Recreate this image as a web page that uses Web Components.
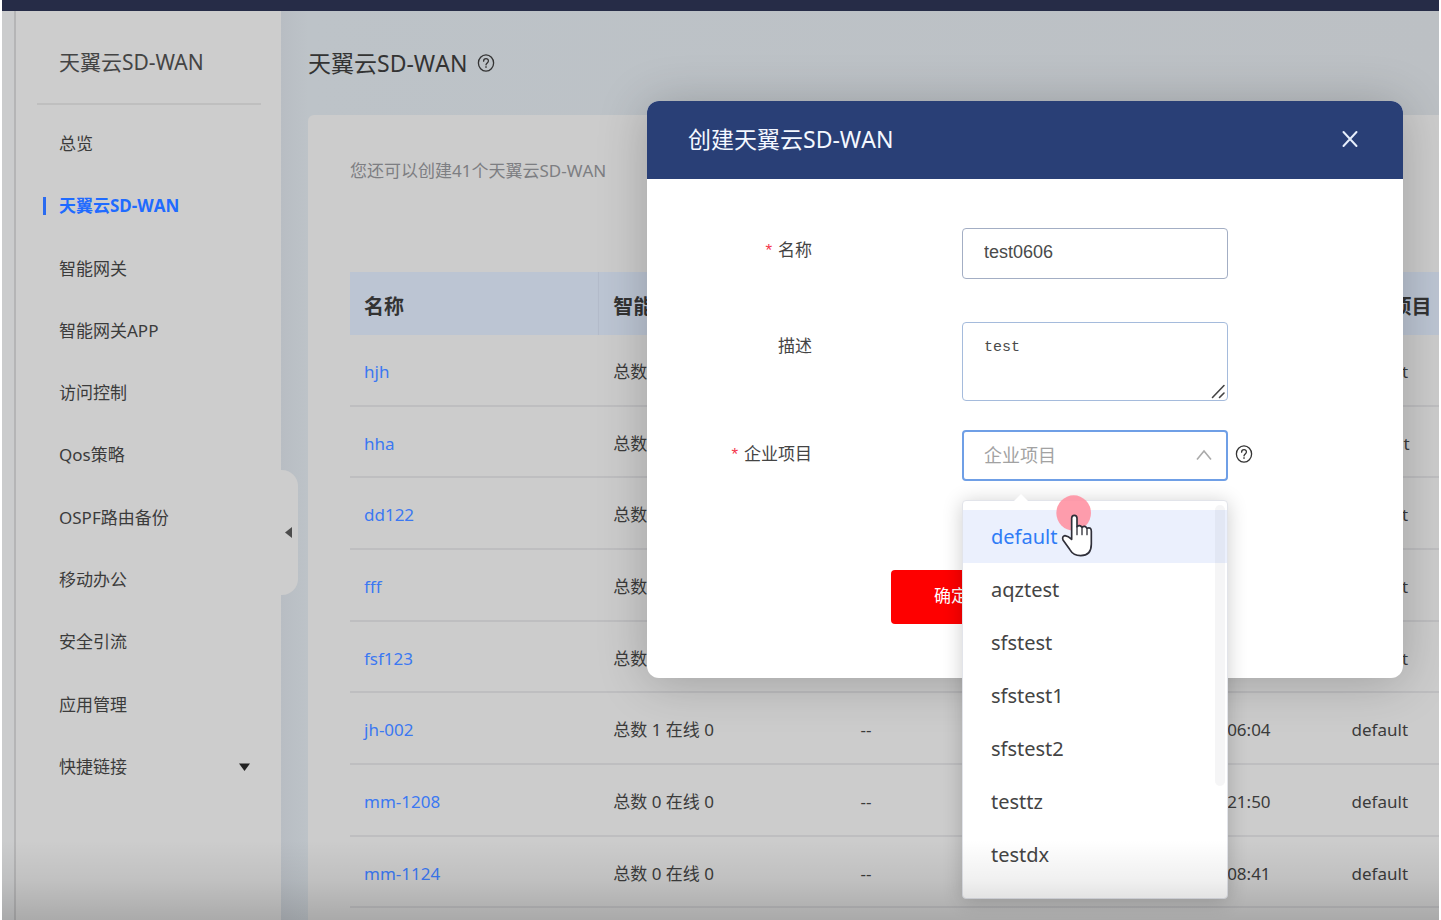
<!DOCTYPE html>
<html lang="zh-CN">
<head>
<meta charset="utf-8">
<title>天翼云SD-WAN</title>
<style>
  html, body { margin: 0; height: 100%; }
  body {
    background: #fff;
    overflow: hidden;
    font: 17px/24px "Noto Sans", "Noto Sans CJK SC", sans-serif;
    font-kerning: none;
    color: #3b3b3b;
  }
</style>
</head>
<body>
<sdwan-app></sdwan-app>

<script>
const define = (name, html, setup) => {
  const template = document.createElement('template');
  template.innerHTML = html;
  customElements.define(name, class extends HTMLElement {
    constructor() {
      super();
      this.attachShadow({ mode: 'open' }).append(template.content.cloneNode(true));
    }
    connectedCallback() {
      if (setup && !this.ready) { this.ready = true; setup(this, this.shadowRoot); }
    }
  });
};

define('help-icon', `
  <style>
    :host { display: inline-flex; color: #333; }
    svg { width: 18px; height: 18px; }
  </style>
  <svg viewBox="0 0 18 18" fill="none" stroke="currentColor" stroke-width="1.3" aria-hidden="true">
    <ellipse cx="9" cy="9" rx="7.6" ry="8.2"/>
    <path d="M6.6 7.2C6.6 3.8 11.6 4 11.4 7C11.3 8.8 9.1 9 9 10.9" stroke-linecap="round"/>
    <circle cx="9" cy="13" r=".5" fill="currentColor" stroke-width=".7"/>
  </svg>`);

define('nav-item', `
  <style>
    :host { display: flex; align-items: center; padding: 0 31px 0 27px; }
    a { flex: 1; display: flex; align-items: center; justify-content: space-between;
        padding-left: 13px; line-height: 18px; color: inherit; text-decoration: none;
        border-left: 3px solid transparent; }
    :host([active]) a { color: #1f6bff; font-weight: 700; border-left-color: #2a6bf0; }
    svg { display: none; width: 11px; height: 8px; }
    :host([expandable]) svg { display: block; }
  </style>
  <a href="#"><slot></slot><svg viewBox="0 0 11 8" aria-hidden="true"><path d="M0 .5H11L5.5 8Z" fill="#222"/></svg></a>`);

define('side-nav', `
  <style>
    :host { display: block; position: relative; box-sizing: border-box; width: 267px;
            background: #cdcdcd; border-left: 2px solid #b5b5b6; }
    h2 { margin: 0 20px 8px 21px; padding: 39px 0 29px 22px; font-size: 21px; line-height: 24px; font-kerning: normal;
         font-weight: 400; color: #444; border-bottom: 2px solid #bfbfbf; white-space: nowrap; }
    nav { display: grid; grid-auto-rows: 1fr; height: 685px; }
    button { position: absolute; left: 100%; top: 459px; width: 17px; height: 125px; padding: 0 0 0 4px;
             border: 0; border-radius: 0 16px 16px 0; background: #cdcdcd; display: flex; align-items: center; }
    button svg { width: 7px; height: 11px; }
  </style>
  <h2>天翼云SD-WAN</h2>
  <nav>
    <nav-item>总览</nav-item>
    <nav-item active>天翼云SD-WAN</nav-item>
    <nav-item>智能网关</nav-item>
    <nav-item>智能网关APP</nav-item>
    <nav-item>访问控制</nav-item>
    <nav-item>Qos策略</nav-item>
    <nav-item>OSPF路由备份</nav-item>
    <nav-item>移动办公</nav-item>
    <nav-item>安全引流</nav-item>
    <nav-item>应用管理</nav-item>
    <nav-item expandable>快捷链接</nav-item>
  </nav>
  <button type="button" aria-label="收起"><svg viewBox="0 0 7 11"><path d="M7 0V11L0 5.5Z" fill="#4c4c4c"/></svg></button>`);

define('wan-table', `
  <style>
    :host { display: block; }
    table { width: 100%; table-layout: fixed; border-collapse: separate; border-spacing: 0; }
    col { width: 22.7%; }
    col:first-child { width: 22.8%; }
    col:nth-child(4) { width: 22.4%; }
    col:last-child { width: auto; }
    th, td { box-sizing: border-box; padding: 4px 0 0 14px; text-align: left; white-space: nowrap; }
    th { height: 63px; padding-top: 6px; background: #bcc5d3; font-size: 20px; color: #333; }
    th + th { border-left: 1px solid #b4bccb; }
    td { height: 72px; border-bottom: 2px solid #bebec0; }
    td + td { padding-left: 15px; }
    tr:nth-child(3n + 2) td { height: 71px; }
    td:nth-child(4) { text-align: right; padding-right: 66px; }
    a { color: #3b78f2; text-decoration: none; }
  </style>
  <table>
    <colgroup><col><col><col><col><col></colgroup>
    <thead><tr><th>名称</th><th>智能网关</th><th></th><th></th><th>企业项目</th></tr></thead>
    <tbody></tbody>
  </table>`, (host, root) => {
  const rows = [
    ['hjh', '总数', '', '', 'default'],
    ['hha', '总数', '', '', 'aqztest'],
    ['dd122', '总数', '', '', 'default'],
    ['fff', '总数', '', '', 'default'],
    ['fsf123', '总数', '', '', 'default'],
    ['jh-002', '总数 1 在线 0', '--', '06:04', 'default'],
    ['mm-1208', '总数 0 在线 0', '--', '21:50', 'default'],
    ['mm-1124', '总数 0 在线 0', '--', '08:41', 'default'],
  ];
  root.querySelector('tbody').innerHTML = rows.map(([name, ...rest]) =>
    `<tr><td><a href="#">${name}</a></td>${rest.map(c => `<td>${c}</td>`).join('')}</tr>`).join('');
});

define('wan-page', `
  <style>
    :host { display: flex; flex-direction: column; min-width: 0; padding-left: 27px;
            background: linear-gradient(90deg, #b8bdc3, #bdc3c8 27px, #bcc0c4); }
    header { display: flex; align-items: center; gap: 10px; height: 104px; }
    h1 { margin: 0; font-size: 23px; line-height: 32px; font-weight: 400; color: #333; white-space: nowrap; }
    section { flex: 1; padding: 44px 0 0 42px; background: #cccccc; border-radius: 6px 0 0 0; }
    p { margin: 0 0 89px; color: #7d7e82; }
  </style>
  <header><h1>天翼云SD-WAN</h1><help-icon></help-icon></header>
  <section>
    <p>您还可以创建41个天翼云SD-WAN</p>
    <wan-table></wan-table>
  </section>`);

define('option-list', `
  <style>
    :host { display: block; box-sizing: border-box; height: 399px; padding: 9px 0;
            background: #fff; border: 1px solid #e2e4ea; border-radius: 4px;
            box-shadow: 0 2px 20px rgba(0, 0, 0, .2); }
    .arrow { position: absolute; left: 50px; top: -7px; width: 16px; height: 8px; }
    .thumb { position: absolute; right: 2px; top: 4px; width: 10px; height: 281px;
             border-radius: 5px; background: rgba(120, 120, 125, .07); }
    ul { margin: 0; padding: 0; list-style: none; }
    button { display: block; width: 100%; height: 53px; padding: 0 28px; border: 0; background: none;
             text-align: left; font: inherit; font-size: 20px; color: #444; }
    button[aria-selected=true] { background: #ebf0fd; color: #2f7cf6; }
  </style>
  <svg class="arrow" viewBox="0 0 16 8" aria-hidden="true"><path d="M0 8L8 0L16 8Z" fill="#fff"/></svg>
  <ul role="listbox" aria-label="企业项目"></ul>
  <span class="thumb"></span>`, (host, root) => {
  root.querySelector('ul').innerHTML =
    ['default', 'aqztest', 'sfstest', 'sfstest1', 'sfstest2', 'testtz', 'testdx'].map((name, i) =>
      `<li role="none"><button type="button" role="option" aria-selected="${i === 0}">${name}</button></li>`).join('');
});

define('create-dialog', `
  <style>
    :host { display: block; box-sizing: border-box; width: 756px; height: 577px; background: #fff;
            border-radius: 12px; box-shadow: 0 4px 50px rgba(0, 0, 0, .22); }
    header { display: flex; align-items: center; justify-content: space-between; box-sizing: border-box; height: 78px;
             padding: 0 45px 2px 41px; background: #293f76; border-radius: 12px 12px 0 0; }
    h2 { margin: 0; font-size: 23px; line-height: 32px; font-weight: 400; color: #f4f8ff; }
    header button { display: flex; padding: 0; border: 0; background: none; }
    header svg { width: 16px; height: 18px; }
    form { padding-top: 49px; }
    .row { display: grid; grid-template-columns: 165px 266px 18px; column-gap: 150px; align-items: start; }
    .row + .row { margin-top: 43px; }
    .row.project { margin-top: 29px; grid-template-columns: 165px 150px 266px 7px 18px; column-gap: 0; }
    .project .control { grid-column: 3; }
    .project help-icon { grid-column: 5; margin-top: 15px; }
    label { text-align: right; line-height: 44px; color: #444; }
    .row:not(:first-child) label { line-height: 48px; }
    .required::before { content: "*"; margin-right: 6px; font-family: "Liberation Sans", sans-serif; color: #f4364c; }
    .control { position: relative; }
    input, textarea, select { display: block; box-sizing: border-box; width: 100%; margin: 0;
      padding: 0 21px; border: 1px solid #a3aec4; border-radius: 4px; background: #fff; color: #4a4a4a; outline: 0; }
    input { height: 51px; padding-bottom: 2px; font: 18px "Liberation Sans", sans-serif; }
    textarea { height: 79px; padding-top: 15px; resize: none; overflow: hidden;
      font: 15px/20px "Liberation Mono", monospace; border-color: #a5bbdc; }
    select { height: 51px; appearance: none; font: inherit; font-size: 18px; color: #a2a2a2;
      border: 2px solid #6f9fe6; padding: 0 20px 2px; }
    .grip { position: absolute; right: 2px; bottom: 2px; width: 15px; height: 15px; }
    .chevron { position: absolute; right: 16px; top: 19px; width: 16px; height: 12px; pointer-events: none; }
    option-list { position: absolute; z-index: 1; left: 0; right: 0; top: 70px; }
    .submit { display: block; width: 120px; height: 54px; margin: 89px 0 0 244px; padding: 0 0 2px; border: 0; border-radius: 4px;
      background: #fe0000; color: #fff; font: inherit; }
  </style>
  <header>
    <h2>创建天翼云SD-WAN</h2>
    <button type="button" aria-label="关闭"><svg viewBox="0 0 16 18"><path d="M1.5 2L14.5 16M14.5 2L1.5 16" stroke="#e6eefc" stroke-width="2" stroke-linecap="round"/></svg></button>
  </header>
  <form>
    <div class="row">
      <label class="required" for="name">名称</label>
      <div class="control"><input id="name" value="test0606"></div>
    </div>
    <div class="row">
      <label for="desc">描述</label>
      <div class="control">
        <textarea id="desc">test</textarea>
        <svg class="grip" viewBox="0 0 15 15" fill="none" stroke="#444" stroke-width="1.6" stroke-linecap="round"><path d="M1.5 13.5L13 1.5M8.5 13.5L13 9"/></svg>
      </div>
    </div>
    <div class="row project">
      <label class="required" for="project">企业项目</label>
      <div class="control">
        <select id="project"><option>企业项目</option></select>
        <svg class="chevron" viewBox="0 0 16 12" fill="none" stroke="#aaa" stroke-width="1.6"><path d="M1 10.5L8 2L15 10.5"/></svg>
        <option-list></option-list>
      </div>
      <help-icon></help-icon>
    </div>
    <button class="submit" type="button">确定</button>
  </form>`);

define('hand-pointer', `
  <style>
    :host { display: block; width: 37px; height: 62px; pointer-events: none; }
    svg { display: block; width: 37px; height: 62px; }
  </style>
  <svg viewBox="528 255 111 186" aria-hidden="true">
    <ellipse cx="581" cy="309" rx="52" ry="53" fill="#ff8fa0" fill-opacity=".88"/>
    <path d="M575 388V325Q575 316 583 316T591 325V350Q599 343 606 352Q615 345 621 355Q634 350 634 364V402Q634 437 602 437Q580 437 569 418L549 390Q545 379 555 377Q565 378 575 388Z"
      fill="#fff" stroke="#30303a" stroke-width="5" stroke-linejoin="round"/>
    <path d="M591 350V374M606 352V374M621 356V374" stroke="#30303a" stroke-width="4" stroke-linecap="round"/>
  </svg>`);

define('sdwan-app', `
  <style>
    :host { display: grid; grid-template: 11px 1fr / 12px auto minmax(0, 1fr); position: relative;
            height: 100vh; margin: 0 2px; overflow: hidden; }
    .topbar { grid-column: 1 / -1; background: #262c47; }
    .rail { background: #cbcccd; }
    side-nav { z-index: 1; }
    .layer { position: absolute; inset: 0; z-index: 2; display: flex; justify-content: flex-end;
             align-items: flex-start; padding: 101px 36px 0 0; }
    hand-pointer { position: absolute; z-index: 3; right: 346px; top: 495px; }
    .shade { position: absolute; z-index: 4; inset: auto 0 0 0; height: 80px; pointer-events: none;
             background: linear-gradient(rgba(0, 0, 0, 0), rgba(0, 0, 0, .06) 50%, rgba(0, 0, 0, .17)); }
  </style>
  <div class="topbar"></div>
  <div class="rail"></div>
  <side-nav></side-nav>
  <wan-page></wan-page>
  <div class="layer"><create-dialog role="dialog" aria-label="创建天翼云SD-WAN"></create-dialog></div>
  <hand-pointer></hand-pointer>
  <div class="shade"></div>`);
</script>
</body>
</html>
